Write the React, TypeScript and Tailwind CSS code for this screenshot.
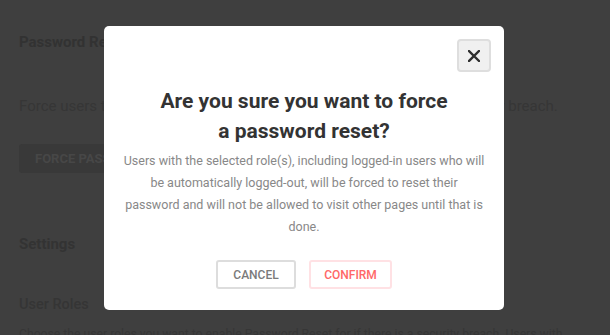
import React from "react";

export default function App() {
  return (
    <div
      className="relative w-[610px] h-[335px] overflow-hidden bg-[#3f3f3f]"
      style={{ fontFamily: "Roboto, 'Liberation Sans', sans-serif" }}
    >
      {/* underlying page (dimmed) */}
      <div className="px-[19px] pt-[32px]">
        <h2 className="text-[15px] leading-[20px] font-bold text-[#323232]">Password Reset</h2>
        <p className="mt-[44px] text-[15px] leading-[20px] text-[#363636] whitespace-nowrap">
          Force users to reset their password on the next login in case of a security breach.
        </p>
        <button className="mt-[28px] h-[29px] px-4 rounded-[3px] bg-[#393939] text-[13px] font-bold text-[#474747] uppercase">
          Force Password Reset
        </button>
        <h3 className="mt-[61px] text-[15px] leading-[20px] font-bold text-[#333333]">Settings</h3>
        <h3 className="mt-[41px] text-[14.5px] leading-[20px] font-medium text-[#353535]">User Roles</h3>
        <p className="mt-[9px] text-[12.2px] leading-[20px] text-[#363636] whitespace-nowrap">
          Choose the user roles you want to enable Password Reset for if there is a security breach. Users with
        </p>
      </div>

      {/* modal overlay */}
      <div className="absolute inset-0 flex justify-center items-start pt-[26px] pr-[2px]">
        <div className="w-[400px] h-[284px] bg-white rounded-[5px] flex flex-col items-center px-[13px] pt-[13px] pb-[21px]">
          <div className="w-full flex justify-end">
            <button className="w-[34px] h-[33px] flex items-center justify-center rounded-[4px] bg-[#f0f0f0] border-2 border-[#dedede]">
              <svg width="12" height="12" viewBox="0 0 12 12" fill="none">
                <path d="M1 1L11 11M11 1L1 11" stroke="#2f2f2f" strokeWidth="2.4" strokeLinecap="square" />
              </svg>
            </button>
          </div>
          <h1 className="mt-[14px] text-[21px] leading-[30px] font-bold text-[#333333] text-center">
            Are you sure you want to force
            <br />
            a password reset?
          </h1>
          <p className="mt-[4px] text-[12.5px] leading-[22px] text-[#888888] text-center whitespace-nowrap">
            Users with the selected role(s), including logged-in users who will
            <br />
            be automatically logged-out, will be forced to reset their
            <br />
            password and will not be allowed to visit other pages until that is
            <br />
            done.
          </p>
          <div className="mt-[22px] flex gap-[13px]">
            <button className="w-[80px] h-[29px] rounded-[3px] border-2 border-[#dddddd] bg-white text-[12px] font-medium text-[#7a7a7a] uppercase">
              Cancel
            </button>
            <button className="w-[83px] h-[29px] rounded-[3px] border-2 border-[#ffe1e4] bg-white text-[12px] font-medium text-[#ff6767] uppercase">
              Confirm
            </button>
          </div>
        </div>
      </div>
    </div>
  );
}
